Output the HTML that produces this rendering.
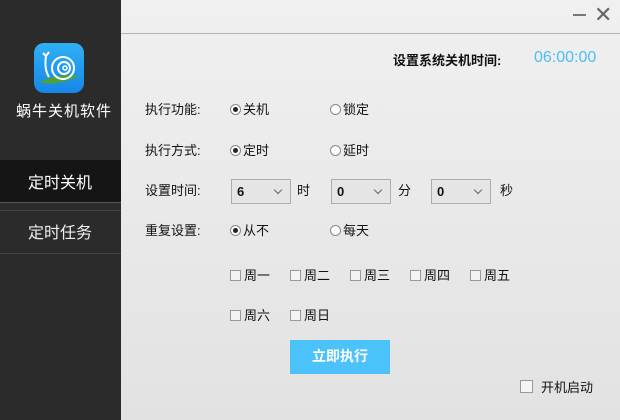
<!DOCTYPE html>
<html><head><meta charset="utf-8"><style>
*{margin:0;padding:0;box-sizing:border-box}
body{width:620px;height:420px;overflow:hidden;font-family:"Liberation Sans","Noto Sans CJK SC",sans-serif;font-size:13px;color:#111;position:relative;background:linear-gradient(#f0f0f0,#e2e2e2)}
.a{position:absolute;white-space:nowrap}
#side{position:absolute;left:0;top:0;width:121px;height:420px;background:#2b2b2b}
.rad{display:inline-block;width:11px;height:11px;border:1px solid #888;border-radius:50%;background:#fff;vertical-align:-1px;margin-right:2px;position:relative}
.rad.on:after{content:"";position:absolute;left:2px;top:2px;width:5px;height:5px;border-radius:50%;background:#222}
.cb{display:inline-block;width:11px;height:11px;border:1px solid #999;background:#f4f4f4;vertical-align:-1px;margin-right:3px}
.sel{position:absolute;width:60px;height:25px;border:1px solid #adadad;background:#e5e5e5;font-weight:bold;font-size:13px;padding:4px 0 0 5px}
.sel:after{content:"";position:absolute;right:9px;top:7px;width:5px;height:5px;border-right:1px solid #666;border-bottom:1px solid #666;transform:rotate(45deg)}
</style></head><body>
<div id="side">
 <div class="a" style="left:34px;top:43px;width:50px;height:50px;border-radius:10px;background:linear-gradient(#2fb0f5,#1687e8)">
  <svg width="50" height="50" viewBox="0 0 50 50"><path d="M5 39 Q22 44 45 33 Q28 29 5 39Z" fill="#4fa23a"/><circle cx="29" cy="25" r="11" fill="none" stroke="#fff" stroke-width="2"/><circle cx="30" cy="25" r="6" fill="none" stroke="#fff" stroke-width="2"/><circle cx="31" cy="25" r="2" fill="none" stroke="#fff" stroke-width="1.5"/><path d="M15 34 Q10 26 12 13 M12 13 l-3 -3 M12 13 l3 -4" stroke="#fff" stroke-width="2" fill="none"/></svg>
 </div>
 <div class="a" style="left:16px;top:100px;color:#fff;font-size:15px;letter-spacing:1px">蜗牛关机软件</div>
 <div class="a" style="left:0;top:160px;width:121px;height:43px;background:#151515;border-bottom:1px solid #555"></div>
 <div class="a" style="left:28px;top:169px;color:#fff;font-size:16px">定时关机</div>
 <div class="a" style="left:0;top:210px;width:121px;border-top:1px solid #444"></div>
 <div class="a" style="left:0;top:253px;width:121px;border-top:1px solid #444"></div>
 <div class="a" style="left:28px;top:219px;color:#eee;font-size:16px">定时任务</div>
</div>
<div class="a" style="left:121px;top:33px;width:499px;border-top:1px solid #b5b5b5"></div>
<div class="a" style="left:573px;top:14px;width:13px;border-top:2px solid #777"></div>
<div class="a" style="left:594px;top:2px;font-size:22px;color:#666">✕</div>
<div class="a" style="left:393px;top:50px;font-weight:bold">设置系统关机时间:</div>
<div class="a" style="left:534px;top:49px;font-size:16px;color:#4dbdf5">06:00:00</div>
<div class="a" style="left:145px;top:99px">执行功能:</div>
<div class="a" style="left:230px;top:99px"><span class="rad on"></span>关机</div>
<div class="a" style="left:330px;top:99px"><span class="rad"></span>锁定</div>
<div class="a" style="left:145px;top:140px">执行方式:</div>
<div class="a" style="left:230px;top:140px"><span class="rad on"></span>定时</div>
<div class="a" style="left:330px;top:140px"><span class="rad"></span>延时</div>
<div class="a" style="left:145px;top:180px">设置时间:</div>
<div class="sel" style="left:231px;top:179px">6</div>
<div class="a" style="left:297px;top:180px">时</div>
<div class="sel" style="left:331px;top:179px">0</div>
<div class="a" style="left:398px;top:180px">分</div>
<div class="sel" style="left:431px;top:179px">0</div>
<div class="a" style="left:500px;top:180px">秒</div>
<div class="a" style="left:145px;top:220px">重复设置:</div>
<div class="a" style="left:230px;top:220px"><span class="rad on"></span>从不</div>
<div class="a" style="left:330px;top:220px"><span class="rad"></span>每天</div>
<div class="a" style="left:230px;top:265px"><span class="cb"></span>周一</div>
<div class="a" style="left:290px;top:265px"><span class="cb"></span>周二</div>
<div class="a" style="left:350px;top:265px"><span class="cb"></span>周三</div>
<div class="a" style="left:410px;top:265px"><span class="cb"></span>周四</div>
<div class="a" style="left:470px;top:265px"><span class="cb"></span>周五</div>
<div class="a" style="left:230px;top:305px"><span class="cb"></span>周六</div>
<div class="a" style="left:290px;top:305px"><span class="cb"></span>周日</div>
<div class="a" style="left:290px;top:340px;width:100px;height:34px;background:#4cc2fb;color:#fff;font-weight:bold;font-size:14px;text-align:center;line-height:33px">立即执行</div>
<div class="a" style="left:520px;top:377px"><span class="cb" style="width:13px;height:13px;margin-right:8px"></span>开机启动</div>
</body></html>
